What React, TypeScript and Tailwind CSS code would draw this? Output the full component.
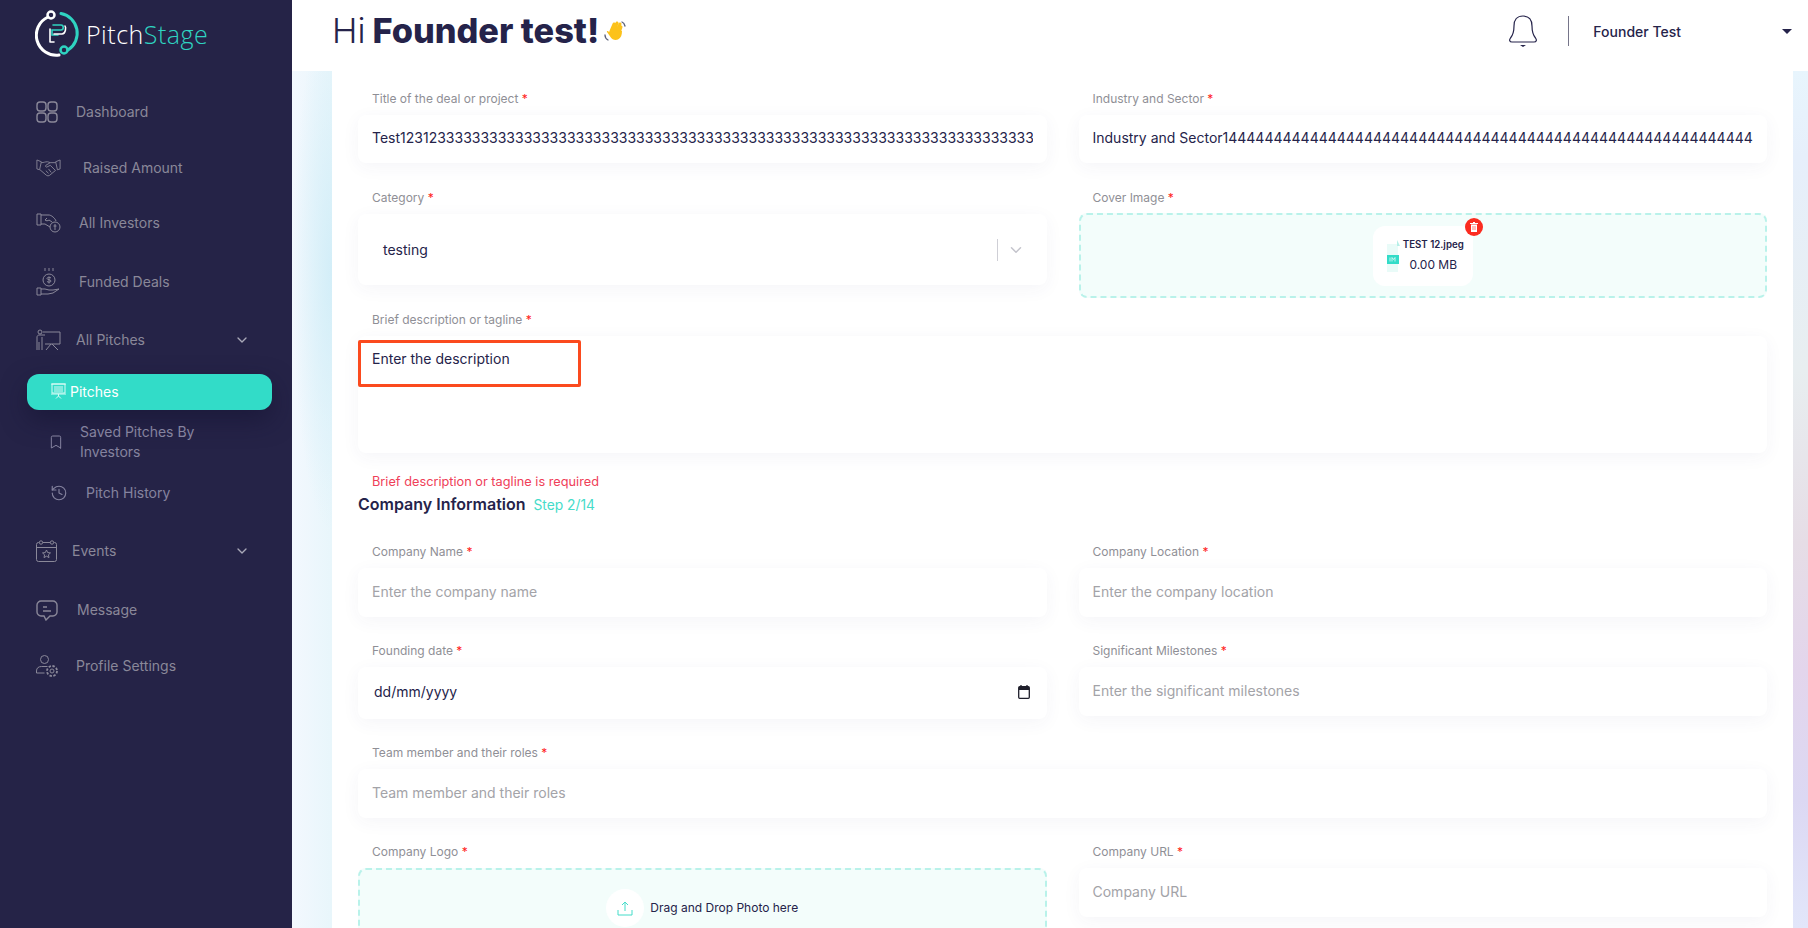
import { Bookmark, ChevronDown, History } from 'lucide-react';
import type { ReactNode } from 'react';

const GridIcon = () => (
  <svg width="22" height="22" viewBox="0 0 22 22" fill="none" stroke="currentColor" strokeWidth="1.4">
    <rect x="1" y="1" width="9" height="9" rx="3" />
    <rect x="12" y="1" width="9" height="9" rx="3" />
    <rect x="1" y="12" width="9" height="9" rx="3" />
    <rect x="12" y="12" width="9" height="9" rx="3" />
  </svg>
);

const HandshakeIcon = () => (
  <svg width="28" height="20" viewBox="0 0 28 20" fill="none" stroke="currentColor" strokeWidth="1">
    <path d="M1 1l5 2-2 9-3-1zM27 1l-5 2 2 9 3-1z" />
    <path d="M6 4c3 0 4-1 7-1l3 1 6 0M4.500 12l7 6c1 1 3 1 4 0l6-5" />
    <path d="M16 4l-5 3c-1 1 0 2 1 2l4-2 6 6M11 13l3 3M14 11l3 4" />
  </svg>
);

const InvestorIcon = () => (
  <svg width="25" height="20" viewBox="0 0 25 20" fill="none" stroke="currentColor" strokeWidth="1">
    <path d="M1 1h4v11H1zM5 2h8c2 0 6 3 7 6M5 11h4l5 3" />
    <path d="M11 5l-2 2c1 1 3 1 4 0l3 2" />
    <circle cx="19" cy="14" r="5" />
    <path d="M19 11v6M17.500 13h3" />
  </svg>
);

const FundedIcon = () => (
  <svg width="25" height="28" viewBox="0 0 25 28" fill="none" stroke="currentColor" strokeWidth="1">
    <path d="M9 0v3M13 0v3M17 0v3" />
    <circle cx="13" cy="12" r="6" />
    <path d="M13 8.500v7M15 10c-1-1-4-1-4 .5s4 1 4 2.500-3 1.500-4 .5" />
    <path d="M1 20h4v7H1zM5 21h4l4 1h4l6-1-6 4-5 1-7 0" />
  </svg>
);

const PitchBoardIcon = () => (
  <svg width="25" height="22" viewBox="0 0 25 22" fill="none" stroke="currentColor" strokeWidth="1">
    <circle cx="4" cy="3" r="2" />
    <path d="M1 21V8c0-1 1-2 2-2h6M3 13v8M6 8v13M7 3h17v12H9M15 15l-5 6M16 15l6 6" />
  </svg>
);

const CalendarStarIcon = () => (
  <svg width="21" height="22" viewBox="0 0 21 22" fill="none" stroke="currentColor" strokeWidth="1">
    <rect x="0.500" y="2.500" width="20" height="19" rx="2" />
    <path d="M0.500 7.500h20" />
    <circle cx="5" cy="2.500" r="1.700" fill="#252347" />
    <circle cx="16" cy="2.500" r="1.700" fill="#252347" />
    <path d="M10.500 10l1.200 2.600 2.800.3-2.100 1.900.6 2.800-2.500-1.400-2.500 1.400.6-2.800-2.100-1.900 2.800-.3z" />
  </svg>
);

const MessageIcon = () => (
  <svg width="22" height="21" viewBox="0 0 22 21" fill="none" stroke="currentColor" strokeWidth="1.400">
    <path d="M5 1h12c2 0 4 2 4 4v7c0 2-2 4-4 4h-3l-4 4-2-4H5c-2 0-4-2-4-4V5c0-2 2-4 4-4z" />
    <path d="M7 7h4M7 11h8" />
  </svg>
);

const ProfileGearIcon = () => (
  <svg width="22" height="22" viewBox="0 0 22 22" fill="none" stroke="currentColor" strokeWidth="1">
    <circle cx="8.500" cy="4.500" r="4" />
    <path d="M.5 18v-2c0-3 2-4.500 5-4.500h6M.5 18h8" />
    <circle cx="16" cy="16" r="2" />
    <circle cx="16" cy="16" r="5" strokeDasharray="2.400 1.500" strokeWidth="1.800" />
  </svg>
);

const PitchesIcon = () => (
  <svg width="15" height="16" viewBox="0 0 15 16" fill="none" stroke="#d8fbf5" strokeWidth="1">
    <path d="M0 1h15M1 1h13v9H1zM0 11h15" />
    <path d="M3 4h9M3 6h9M3 8h9M7.500 11v2M5 15.500l2.500-2.500 2.500 2.500" />
  </svg>
);

const Logo = () => (
  <svg width="46" height="48" viewBox="0 0 46 48" fill="none" strokeLinecap="round">
    <path d="M13 7A20 20 0 0 0 24 45" stroke="#ffffff" strokeWidth="3" />
    <path d="M26 3.500A20 20 0 0 1 33 40" stroke="#2fd3c1" strokeWidth="3" />
    <circle cx="16" cy="5" r="3.500" stroke="#ffffff" strokeWidth="2.500" />
    <circle cx="29" cy="40" r="3.500" stroke="#2fd3c1" strokeWidth="2.500" />
    <path d="M18 15h8c3 0 3 5 0 5h-9v5h6" stroke="#2fd3c1" strokeWidth="1.600" />
    <path d="M15 32V19M15 32h4M19 24h8c4 0 4-7 3-8" stroke="#ffffff" strokeWidth="1.600" />
  </svg>
);

const WaveHand = () => (
  <svg width="22" height="22" viewBox="0 0 22 22" fill="none">
    <g stroke="#fcc21b" strokeWidth="3" strokeLinecap="round">
      <path d="M7 11l3-7M10 12l3-9M13 12l3-8M15 13l2-6" />
    </g>
    <path d="M5 12l3-3 10 2c0 4-1 7-4 8.500-3 1-6 0-7.500-2.500L3 12c-.5-1 1-1.500 2 0z" fill="#fcc21b" />
    <path d="M18 2c1.500.5 2.500 2 3 4M1 15c0 2 1 4 3 5" stroke="#5c6078" strokeWidth="1.300" strokeLinecap="round" />
  </svg>
);

const Req = () => <span className="text-[#ff2020]"> *</span>;

const Field = ({
  label,
  children,
  className = '',
}: {
  label: string;
  children: ReactNode;
  className?: string;
}) => (
  <div className={className}>
    <label className="block h-[17px] pl-[14px] text-[12px] leading-[17px] text-[#8f8f96]">
      {label}
      <Req />
    </label>
    {children}
  </div>
);

const TextBox = ({ value, placeholder, h = 'h-[49px]' }: { value?: string; placeholder?: string; h?: string }) => (
  <div className={`mt-[8px] flex ${h} items-center overflow-hidden rounded-[8px] bg-white px-[14px] pb-[3px] text-[14px] whitespace-nowrap shadow-[0_4px_18px_rgba(60,60,120,0.05)]`}>
    <span className={value ? 'overflow-hidden text-[#25234a]' : 'text-[#a3a3a8]'}>{value ?? placeholder}</span>
  </div>
);

const NavItem = ({
  icon,
  label,
  h,
  gap,
  chevron,
  sub,
}: {
  icon: ReactNode;
  label: string;
  h: string;
  gap: string;
  chevron?: boolean;
  sub?: boolean;
}) => (
  <div className={`flex items-center ${h} ${sub ? 'pl-[50px] text-[#85839f]' : 'pl-[36px] text-[#8a8899]'} pr-[20px] text-[14px] leading-[20px]`}>
    <span className="flex w-[25px] shrink-0 items-center">{icon}</span>
    <span className={gap}>{label}</span>
    {chevron && <ChevronDown size={16} strokeWidth={2} className="ml-auto mr-[22px] text-[#a9a8b8]" />}
  </div>
);

const Sidebar = () => (
  <aside className="flex w-[292px] shrink-0 flex-col bg-[#252347]">
    <div className="flex h-[84px] items-start pl-[35px] pt-[10px]">
      <Logo />
      <span className="ml-[5px] mt-[9px] font-['Open_Sans'] text-[25px] leading-[30px] font-light tracking-[0.5px]">
        <span className="text-white">Pitch</span>
        <span className="text-[#2fd3c1]">Stage</span>
      </span>
    </div>
    <NavItem h="h-[56px]" gap="ml-[15px]" icon={<GridIcon />} label="Dashboard" />
    <NavItem h="h-[55px]" gap="ml-[22px]" icon={<HandshakeIcon />} label="Raised Amount" />
    <NavItem h="h-[56px]" gap="ml-[18px]" icon={<InvestorIcon />} label="All Investors" />
    <NavItem h="h-[62px]" gap="ml-[18px]" icon={<FundedIcon />} label="Funded Deals" />
    <NavItem h="h-[54px]" gap="ml-[15px]" icon={<PitchBoardIcon />} label="All Pitches" chevron />
    <div className="ml-[27px] mr-[20px] mt-[7px] flex h-[36px] items-center rounded-[12px] bg-[#32dcc8] pb-[2px] pl-[24px] text-[14px] text-white shadow-[0_10px_24px_rgba(20,18,50,0.55)]">
      <PitchesIcon />
      <span className="ml-[4px]">Pitches</span>
    </div>
    <div className="mt-[2px] flex h-[60px] items-center pl-[48px] pr-[60px] text-[14px] leading-[20px] text-[#85839f]">
      <Bookmark size={16} strokeWidth={1.500} className="w-[16px] shrink-0" />
      <span className="ml-[16px]">Saved Pitches By Investors</span>
    </div>
    <NavItem h="h-[42px]" gap="ml-[11px]" sub icon={<History size={18} strokeWidth={1.500} />} label="Pitch History" />
    <NavItem h="h-[74px]" gap="ml-[11px]" icon={<CalendarStarIcon />} label="Events" chevron />
    <NavItem h="h-[44px]" gap="ml-[16px]" icon={<MessageIcon />} label="Message" />
    <NavItem h="h-[68px]" gap="ml-[15px]" icon={<ProfileGearIcon />} label="Profile Settings" />
  </aside>
);

const Header = () => (
  <header className="flex h-[71px] shrink-0 items-center bg-white pb-[9px] pl-[40px]">
    <h1 className="flex items-center text-[34.3px] leading-[40px] text-[#25234a]">
      <span className="font-light">Hi</span>
      <span className="ml-[7px] font-extrabold">Founder test!</span>
      <span className="ml-[5px]"><WaveHand /></span>
    </h1>
    <div className="ml-auto flex items-center">
      <svg width="30" height="34" viewBox="0 0 30 34" fill="none" stroke="#25234a" strokeWidth="1.200">
        <path d="M15 2c-6 0-9 4-9 10 0 5-1 9-3.500 12-1.500 2-1 4 1.500 4h22c2.500 0 3-2 1.500-4-2.500-3-3.500-7-3.500-12 0-6-3-10-9-10z" />
        <path d="M12 31h6l-3 2z" fill="#25234a" stroke="none" />
      </svg>
      <span className="ml-[30px] h-[30px] w-px bg-[#76758a]" />
      <span className="ml-[24px] text-[14px] font-medium text-[#25234a]">Founder Test</span>
      <span className="ml-[101px] mr-[16px] h-0 w-0 border-x-[5px] border-t-[5px] border-x-transparent border-t-[#25234a]" />
    </div>
  </header>
);

const Dropzone = ({ children, className = '' }: { children: ReactNode; className?: string }) => (
  <div className={`flex items-center justify-center rounded-[8px] border-2 border-dashed border-[#b9f2ea] bg-[#f3fdfb] ${className}`}>
    {children}
  </div>
);

const TITLE = 'Test12312' + '3'.repeat(90);
const SECTOR = 'Industry and Sector1' + '4'.repeat(80);

const App = () => (
  <div className="flex h-[928px] w-[1808px] overflow-hidden font-['Inter',sans-serif]">
    <Sidebar />
    <div className="flex min-w-0 flex-1 flex-col">
      <Header />
      <div className="flex min-h-0 flex-1">
        <div className="w-[40px] shrink-0 bg-[radial-gradient(ellipse_40px_260px_at_100%_200px,#d3eef8,transparent),linear-gradient(to_right,#f3f8fe,#e8f6fb)]" />
        <main className="min-w-0 flex-1 overflow-hidden bg-white pl-[26px] pr-[26px] pt-[19px]">
          <div className="grid grid-cols-2 gap-x-[32px]">
            <Field label="Title of the deal or project">
              <TextBox value={TITLE} h="h-[48px]" />
            </Field>
            <Field label="Industry and Sector">
              <TextBox value={SECTOR} h="h-[48px]" />
            </Field>
          </div>

          <div className="mt-[26px] grid grid-cols-2 gap-x-[32px]">
            <Field label="Category">
              <div className="mt-[8px] flex h-[71px] items-center rounded-[8px] bg-white pl-[25px] text-[14px] text-[#25234a] shadow-[0_4px_18px_rgba(60,60,120,0.05)]">
                testing
                <span className="ml-auto h-[22px] w-px bg-[#cfcfd6]" />
                <ChevronDown size={18} strokeWidth={2} className="mx-[22px] ml-[9px] text-[#c4c4cc]" />
              </div>
            </Field>
            <Field label="Cover Image">
              <Dropzone className="mt-[7px] h-[85px]">
                <div className="relative flex h-[60px] w-[100px] items-center rounded-[12px] bg-white pl-[14px]">
                  <svg width="13" height="32" viewBox="0 0 13 32" className="shrink-0">
                    <path d="M0 4h11v28H0z" fill="#e9fbf8" />
                    <path d="M10 0l3 6h-3z" fill="#b5efe7" />
                    <rect x="0" y="15" width="12" height="9" fill="#32dcc8" />
                    <path d="M3 17.500v4M5 21.500v-4l1.500 2 1.500-2v4" stroke="#ffffff" strokeWidth="0.700" fill="none" />
                  </svg>
                  <div className="ml-[3px] text-center text-[#25234a]">
                    <div className="text-[9.7px] leading-[12px] font-semibold whitespace-nowrap">TEST 12.jpeg</div>
                    <div className="mt-[6px] text-[12px] leading-[16px]">0.00 MB</div>
                  </div>
                  <span className="absolute -right-[10px] -top-[8px] flex h-[18px] w-[18px] items-center justify-center rounded-full bg-[#fb2c20]">
                    <svg width="8" height="10" viewBox="0 0 8 10">
                      <path d="M0 1h8v1H0zM3 0h2v1H3zM1 2.500h6V10H1z" fill="#ffffff" />
                      <path d="M3 4v4M5 4v4" stroke="#fb2c20" strokeWidth="0.600" />
                    </svg>
                  </span>
                </div>
              </Dropzone>
            </Field>
          </div>

          <Field label="Brief description or tagline" className="mt-[13px]">
            <div className="relative mt-[8px] h-[117px] rounded-[8px] bg-white pl-[14px] pt-[13px] text-[14px] leading-[20px] text-[#25234a] shadow-[0_4px_18px_rgba(60,60,120,0.05)]">
              Enter the description
              <span className="absolute left-0 top-[4px] h-[47px] w-[223px] rounded-[2px] border-[3px] border-[#fb4a1e]" />
            </div>
          </Field>
          <p className="mt-[20px] pl-[14px] text-[12.75px] leading-[18px] text-[#ef4058]">
            Brief description or tagline is required
          </p>
          <div className="mt-[2px] flex items-baseline leading-[22px]">
            <span className="text-[16px] font-semibold text-[#25234a]">Company Information</span>
            <span className="ml-[8px] text-[13.8px] text-[#45dcc9]">Step 2/14</span>
          </div>

          <div className="mt-[27px] grid grid-cols-2 gap-x-[32px]">
            <Field label="Company Name">
              <TextBox placeholder="Enter the company name" />
            </Field>
            <Field label="Company Location">
              <TextBox placeholder="Enter the company location" />
            </Field>
          </div>

          <div className="mt-[25px] grid grid-cols-2 items-start gap-x-[32px]">
            <Field label="Founding date">
              <div className="mt-[8px] flex h-[52px] items-center justify-between rounded-[8px] bg-white pb-[3px] pl-[16px] pr-[17px] text-[14px] text-[#25234a] shadow-[0_4px_18px_rgba(60,60,120,0.05)]">
                dd/mm/yyyy
                <svg width="12" height="14" viewBox="0 0 12 14" fill="none">
                  <path d="M3 0v2M9 0v2" stroke="#1f1f2b" strokeWidth="1.300" />
                  <rect x="0.700" y="1.700" width="10.600" height="11.600" rx="1" stroke="#1f1f2b" strokeWidth="1.300" />
                  <rect x="1" y="2" width="10" height="3" fill="#1f1f2b" />
                </svg>
              </div>
            </Field>
            <Field label="Significant Milestones">
              <TextBox placeholder="Enter the significant milestones" />
            </Field>
          </div>

          <Field label="Team member and their roles" className="mt-[25px]">
            <TextBox placeholder="Team member and their roles" />
          </Field>

          <div className="mt-[25px] grid grid-cols-2 items-start gap-x-[32px]">
            <Field label="Company Logo">
              <Dropzone className="mt-[8px] h-[80px]">
                <span className="flex h-[38px] w-[38px] items-center justify-center rounded-full bg-white text-[#45dcc9]">
                  <svg width="16" height="16" viewBox="0 0 16 16" fill="none" stroke="currentColor" strokeWidth="1">
                    <path d="M8 11V2M5 5l3-3 3 3M1 10v5h14v-5" />
                  </svg>
                </span>
                <span className="ml-[6px] text-[12px] text-[#25234a]">Drag and Drop Photo here</span>
              </Dropzone>
            </Field>
            <Field label="Company URL">
              <TextBox placeholder="Company URL" />
            </Field>
          </div>
        </main>
        <div className="w-[15px] shrink-0 bg-[linear-gradient(to_bottom,#e8f5fd_0%,#e6effb_10%,#e8eef0_35%,#e6dde6_55%,#e3d5ec_70%,#dcd8f3_85%,#e2e6fa_100%)]" />
      </div>
    </div>
  </div>
);

export default App;
